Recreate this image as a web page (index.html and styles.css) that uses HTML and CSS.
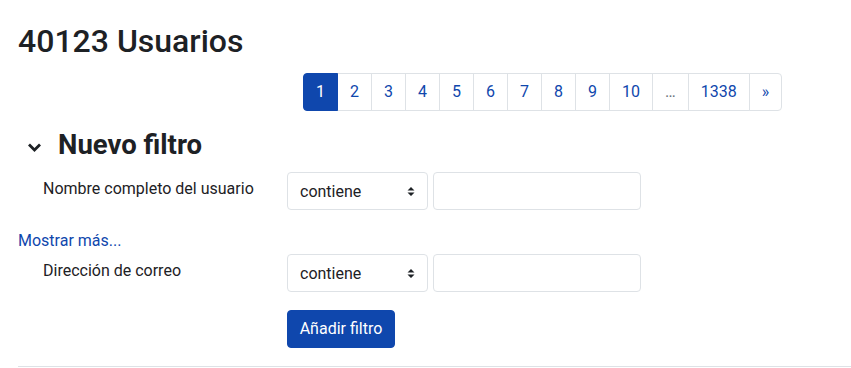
FILE: index.html
```html
<!DOCTYPE html>
<html lang="es">
<head>
<meta charset="utf-8">
<link rel="stylesheet" href="styles.css">
</head>
<body>
<div class="page">
  <h2 class="title">40123 Usuarios</h2>
  <nav class="pager">
    <ul class="pagination">
      <li class="page-item active"><span class="page-link">1</span></li>
      <li class="page-item"><span class="page-link">2</span></li>
      <li class="page-item"><span class="page-link">3</span></li>
      <li class="page-item"><span class="page-link">4</span></li>
      <li class="page-item"><span class="page-link">5</span></li>
      <li class="page-item"><span class="page-link">6</span></li>
      <li class="page-item"><span class="page-link">7</span></li>
      <li class="page-item"><span class="page-link">8</span></li>
      <li class="page-item"><span class="page-link">9</span></li>
      <li class="page-item"><span class="page-link">10</span></li>
      <li class="page-item"><span class="page-link muted">…</span></li>
      <li class="page-item"><span class="page-link">1338</span></li>
      <li class="page-item"><span class="page-link">»</span></li>
    </ul>
  </nav>
  <div class="legend">
    <svg class="chevron" width="15" height="10" viewBox="0 0 15 10"><path d="M2 2.5 L7.5 8 L13 2.5" fill="none" stroke="#1d2125" stroke-width="2.8" stroke-linecap="butt" stroke-linejoin="miter"/></svg>
    <span class="legend-text">Nuevo filtro</span>
  </div>
  <div class="row">
    <label class="label">Nombre completo del usuario</label>
    <div class="controls">
      <div class="select"><span>contiene</span><svg width="8" height="11" viewBox="0 0 8 11"><path d="M0.5 4.5 L4 1 L7.5 4.5 Z M0.5 6.5 L4 10 L7.5 6.5 Z" fill="#1d2125"/></svg></div>
      <div class="input"></div>
    </div>
  </div>
  <a class="more">Mostrar más...</a>
  <div class="row">
    <label class="label">Dirección de correo</label>
    <div class="controls">
      <div class="select"><span>contiene</span><svg width="8" height="11" viewBox="0 0 8 11"><path d="M0.5 4.5 L4 1 L7.5 4.5 Z M0.5 6.5 L4 10 L7.5 6.5 Z" fill="#1d2125"/></svg></div>
      <div class="input"></div>
    </div>
  </div>
  <div class="actions">
    <button class="btn">Añadir filtro</button>
  </div>
  <hr class="sep">
</div>
</body>
</html>
```

FILE: styles.css
```css
* { box-sizing: border-box; }
html, body { margin: 0; padding: 0; background: #fff; }
body {
  font-family: Roboto, "Liberation Sans", sans-serif;
  font-size: 16px;
  color: #1d2125;
}
.page { padding: 0 0 0 18px; }
.title {
  margin: 0;
  padding-top: 21px;
  font-size: 32px;
  font-weight: 500;
  line-height: 40px;
  color: #1d2125;
  height: 73px;
}
.pager { display: flex; padding-left: 285px; }
.pagination {
  list-style: none;
  margin: 0;
  padding: 0;
  display: flex;
}
.page-link {
  display: block;
  padding: 8px 12px;
  line-height: 20px;
  font-size: 16px;
  color: #0f47ad;
  border: 1px solid #dee2e6;
  margin-left: -1px;
  background: #fff;
}
.page-item:first-child .page-link { margin-left: 0; border-radius: 4px 0 0 4px; }
.page-item:last-child .page-link { border-radius: 0 4px 4px 0; }
.page-item.active .page-link { background: #0f47ad; border-color: #0f47ad; color: #fff; position: relative; z-index: 1; }
.page-link.muted { color: #6a737b; }
.legend {
  display: flex;
  align-items: center;
  margin-top: 17px;
  height: 34px;
  padding-left: 9px;
}
.chevron { margin-right: 16px; margin-top: 3px; }
.legend-text { font-size: 27.5px; font-weight: 700; line-height: 34px; }
.row {
  display: flex;
  align-items: flex-start;
  margin-top: 10px;
}
.label {
  width: 269px;
  padding-left: 25px;
  padding-top: 7px;
  line-height: 20px;
}
.controls { display: flex; gap: 5px; }
.select {
  width: 141px;
  height: 38px;
  border: 1px solid #dee2e6;
  border-radius: 4px;
  display: flex;
  align-items: center;
  justify-content: space-between;
  padding: 0 12px 0 12px;
  color: #1d2125;
}
.input {
  width: 208px;
  height: 38px;
  border: 1px solid #dee2e6;
  border-radius: 4px;
}
.more {
  display: block;
  margin-top: 21px;
  color: #0f47ad;
  line-height: 20px;
  height: 20px;
}
.more + .row { margin-top: 3px; }
.actions { padding-left: 269px; margin-top: 18px; }
.btn {
  font-family: inherit;
  font-size: 16px;
  color: #fff;
  background: #0f47ad;
  border: 1px solid #0f47ad;
  border-radius: 4px;
  height: 38px;
  width: 108px;
  padding: 0;
  line-height: 20px;
}
.sep {
  margin: 18px 0 0 0;
  border: 0;
  border-top: 1px solid #dee2e6;
}
```
